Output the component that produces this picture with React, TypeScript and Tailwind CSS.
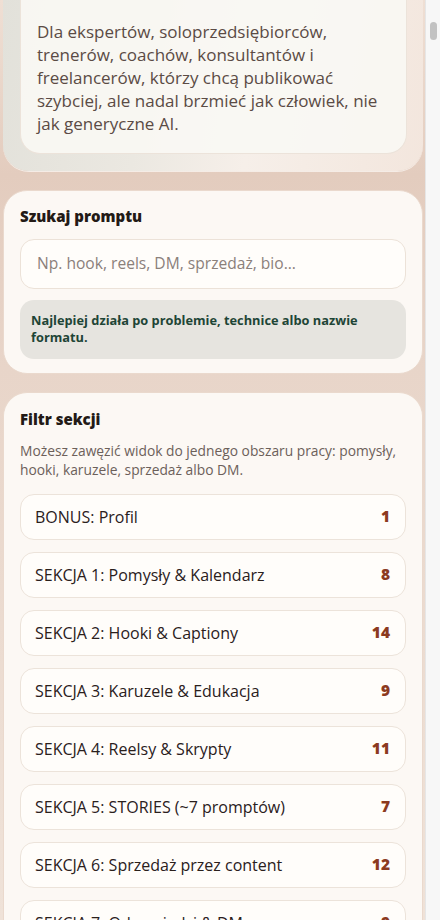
const sections = [
  { name: 'BONUS: Profil', count: 1 },
  { name: 'SEKCJA 1: Pomysły & Kalendarz', count: 8 },
  { name: 'SEKCJA 2: Hooki & Captiony', count: 14 },
  { name: 'SEKCJA 3: Karuzele & Edukacja', count: 9 },
  { name: 'SEKCJA 4: Reelsy & Skrypty', count: 11 },
  { name: 'SEKCJA 5: STORIES (~7 promptów)', count: 7 },
  { name: 'SEKCJA 6: Sprzedaż przez content', count: 12 },
  { name: 'SEKCJA 7: Odpowiedzi & DM', count: 9 },
];

export default function App() {
  return (
    <div className="flex h-[920px] w-[440px] overflow-hidden font-['Open_Sans','Noto_Sans',sans-serif]">
      {/* page content (scrolled) */}
      <div className="h-full w-[425px] overflow-hidden bg-[linear-gradient(180deg,#efdfd4_0%,#e3ccbe_19%,#e8d5c9_40%,#efe2d8_100%)] px-[3px] pr-[2px]">
        {/* hero card, top part scrolled away */}
        <div className="rounded-b-[26px] bg-[linear-gradient(100deg,#e2e1da_0%,#ebe8e1_35%,#f6efe9_60%,#f3e6dd_100%)] px-[17px] pb-[17px] pr-[16px] shadow-[0_1px_0_#f5ece6]">
          <div className="rounded-b-[20px] border border-t-0 border-[#ece3da] bg-[#faf8f4]/90 px-[16px] pt-[20px] pb-[18px]">
            <p className="text-[17px] leading-[23px] text-[#5b4b45]">
              Dla ekspertów, soloprzedsiębiorców, trenerów, coachów, konsultantów i freelancerów, którzy chcą publikować szybciej, ale nadal brzmieć jak człowiek, nie jak generyczne AI.
            </p>
          </div>
        </div>

        {/* search */}
        <div className="mt-[19px] rounded-[24px] border border-[#ead9cd] bg-[#fcf8f4] px-[16px] pt-[15px] pb-[14px]">
          <h3 className="text-[15px] font-extrabold leading-[20px] text-[#231a16]">Szukaj promptu</h3>
          <div className="mt-[13px] flex h-[50px] items-center rounded-[14px] border border-[#ece2d8] bg-[#fffdfa] px-[16px]">
            <span className="text-[15.6px] text-[#8b807a]">Np. hook, reels, DM, sprzedaż, bio...</span>
          </div>
          <div className="mt-[11px] rounded-[14px] bg-[#e6e4df] px-[11px] pt-[12px] pb-[13px]">
            <p className="text-[12.8px] font-bold leading-[17px] text-[#1e4536]">
              Najlepiej działa po problemie, technice albo nazwie formatu.
            </p>
          </div>
        </div>

        {/* filter */}
        <div className="mt-[18px] rounded-t-[24px] border border-b-0 border-[#ead9cd] bg-[#fcf8f4] px-[16px] pt-[16px] pb-4">
          <h3 className="text-[15px] font-extrabold leading-[20px] text-[#231a16]">Filtr sekcji</h3>
          <p className="mt-[12px] text-[13.8px] leading-[19px] text-[#6c605a]">
            Możesz zawęzić widok do jednego obszaru pracy: pomysły, hooki, karuzele, sprzedaż albo DM.
          </p>
          <div className="mt-[15px] flex flex-col gap-[12px]">
            {sections.map((s) => (
              <div
                key={s.name}
                className="flex h-[46px] items-center justify-between rounded-[14px] border border-[#ece3da] bg-[#fffdfa] pl-[14px] pr-[15px]"
              >
                <span className="text-[16px] text-[#2a201c]">{s.name}</span>
                <span className="text-[15.5px] font-extrabold text-[#8c3a1f]">{s.count}</span>
              </div>
            ))}
          </div>
        </div>
      </div>

      {/* scrollbar */}
      <div className="h-full w-[15px] border-l border-[#e6e6e6] bg-[#f7f7f7] pt-[22px]">
        <div className="mx-auto h-[18px] w-[7px] rounded-full bg-[#c2c2c2]" />
      </div>
    </div>
  );
}
